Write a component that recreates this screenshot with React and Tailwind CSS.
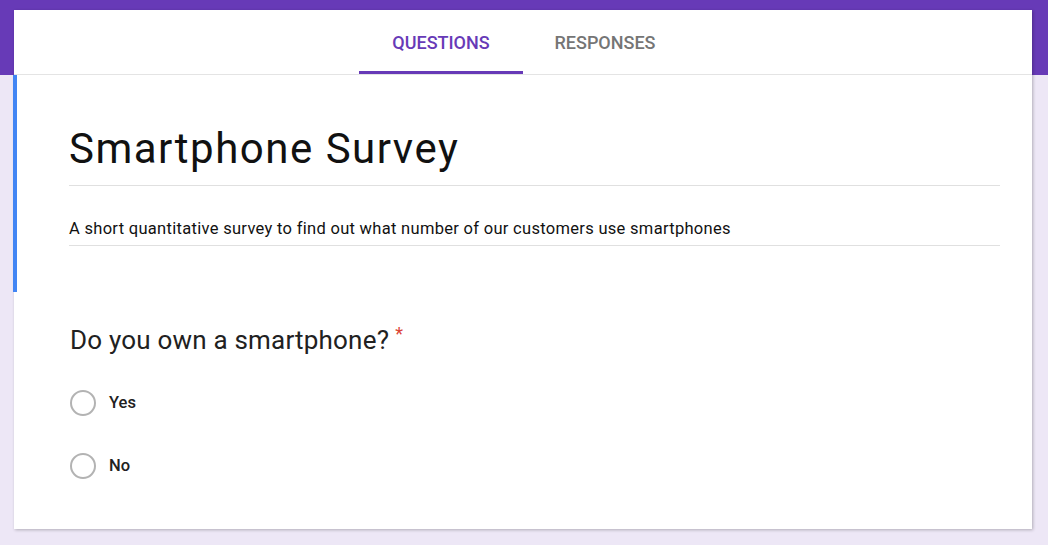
import React from 'react';

const OPTIONS = ['Yes', 'No'];

const Radio = ({ label }) => (
  <label className="flex items-center gap-[13px] h-[26px] cursor-pointer">
    <span className="w-[26px] h-[26px] rounded-full border-2 border-[#b3b3b3] shrink-0" />
    <span className="text-[16.5px] font-medium text-[#212121]">{label}</span>
  </label>
);

const App = () => {
  return (
    <div className="w-full h-[545px] bg-[#ede7f6] overflow-hidden font-['Roboto','Liberation_Sans',sans-serif]">
      {/* PURPLE BAND */}
      <div className="h-[75px] bg-[#673ab7]" />

      {/* CARD */}
      <div className="-mt-[65px] ml-[14px] mr-[16px] bg-white shadow-[1px_1px_3px_rgba(0,0,0,0.25)]">
        {/* TABS */}
        <div className="h-[65px] flex justify-center border-b border-[#e4e4e4]">
          <div className="w-[164px] flex flex-col items-center justify-end">
            <span className="text-[18px] font-medium text-[#673ab7] mb-[15px]">QUESTIONS</span>
            <span className="w-full h-[3px] bg-[#673ab7]" />
          </div>
          <div className="w-[164px] flex flex-col items-center justify-end">
            <span className="text-[18px] font-medium text-[#757575] mb-[18px]">RESPONSES</span>
          </div>
        </div>

        {/* TITLE */}
        <div className="border-l-4 border-[#4285f4] pl-[52px] pr-[32px] pt-[46px] h-[217px] -ml-[1px]">
          <h1 className="text-[42px] leading-[56px] tracking-[1.5px] text-[#111] pb-[8px] border-b border-[#e0e0e0]">Smartphone Survey</h1>
          <p className="text-[16.5px] leading-[20px] tracking-[0.3px] text-[#111] pt-[33px] pb-[6px] border-b border-[#e0e0e0]">
            A short quantitative survey to find out what number of our customers use smartphones
          </p>
        </div>

        {/* QUESTION */}
        <div className="pl-[56px] pt-[32px] pb-[50px]">
          <h2 className="text-[26px] leading-[32px] tracking-[0.2px] text-[#212121] flex items-start">
            Do you own a smartphone?<span className="text-[#db4437] text-[18px] leading-[20px] ml-[6px]">*</span>
          </h2>
          <div className="flex flex-col gap-[37px] mt-[34px]">
            {OPTIONS.map(o => <Radio key={o} label={o} />)}
          </div>
        </div>
      </div>
    </div>
  );
};

export default App;
